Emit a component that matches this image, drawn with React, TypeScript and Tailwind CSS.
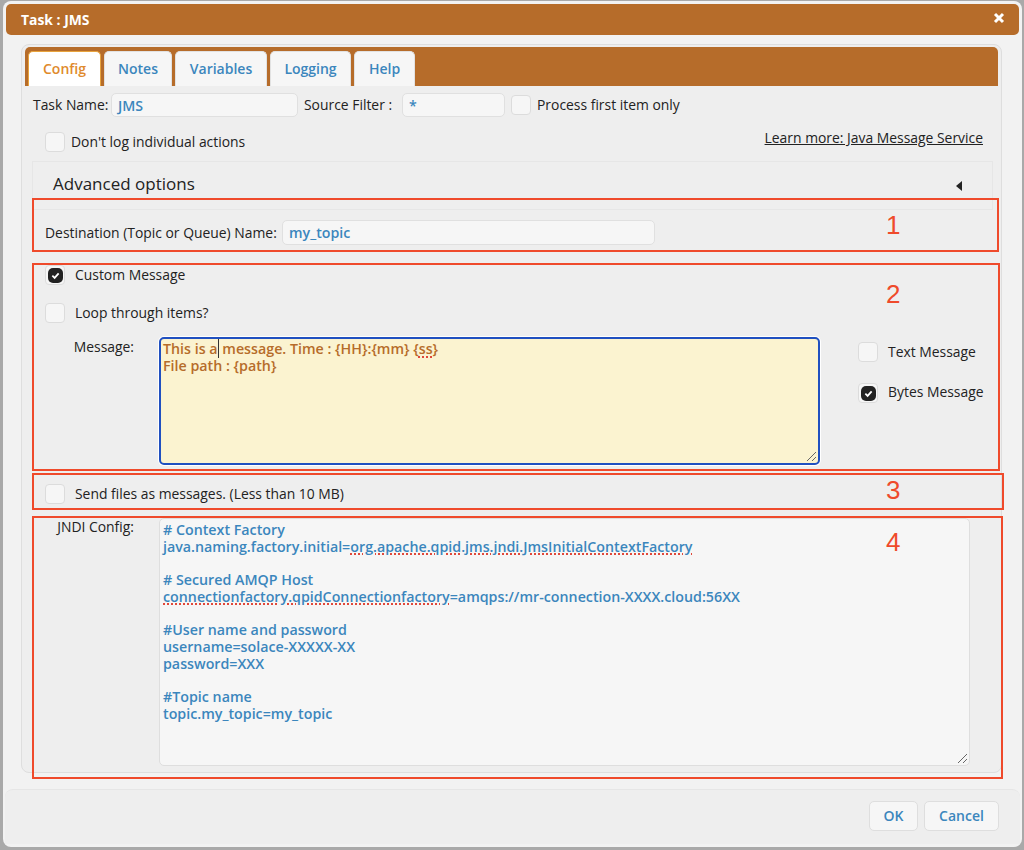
import React from "react";

const wavy = "underline decoration-dotted decoration-[#e0483a] decoration-2 underline-offset-[2px]";

function Check({ on = false }: { on?: boolean }) {
  return (
    <span className="flex h-[20px] w-[20px] shrink-0 items-center justify-center rounded-[4px] border border-[#dcdcdc] bg-[#f6f6f6]">
      {on && (
        <span className="flex h-[15px] w-[15px] items-center justify-center rounded-[5px] bg-[#222]">
          <svg width="9" height="9" viewBox="0 0 10 10">
            <path d="M1.5 5.2 L4 7.6 L8.5 2.6" fill="none" stroke="#fff" strokeWidth="2" />
          </svg>
        </span>
      )}
    </span>
  );
}

function Tab({ label, active = false, w }: { label: string; active?: boolean; w: string }) {
  return (
    <div
      className={`flex h-[35px] items-center justify-center rounded-t-[5px] border border-b-0 pb-[2px] text-[14px] font-semibold ${w} ${
        active ? "border-[#e8a33d] bg-white text-[#e08a2c]" : "border-[#e2e2e2] bg-[#f6f6f6] text-[#3b86bd]"
      }`}
    >
      {label}
    </div>
  );
}

function Field({ value, w }: { value: string; w: string }) {
  return (
    <div className={`flex h-full items-center rounded-[5px] border border-[#e0e0e0] bg-[#f6f6f6] px-[6px] text-[14.2px] font-semibold text-[#3b86bd] ${w}`}>
      {value}
    </div>
  );
}

function Grip() {
  return (
    <svg className="absolute bottom-[1px] right-[1px]" width="11" height="11" viewBox="0 0 11 11">
      <path d="M1 10 L10 1 M6 10 L10 6" stroke="#666" strokeWidth="1" />
    </svg>
  );
}

function Box({ x, y, w, h }: { x: string; y: string; w: string; h: string }) {
  return <div className={`pointer-events-none absolute border-2 border-[#ef4a2b] ${x} ${y} ${w} ${h}`} />;
}

function Num({ n, cls }: { n: string; cls: string }) {
  return (
    <div className={`absolute text-[26px] leading-[30px] text-[#ef4a2b] font-['Liberation_Sans',sans-serif] ${cls}`}>{n}</div>
  );
}

export default function App() {
  return (
    <div className="relative h-[850px] w-[1024px] overflow-hidden bg-[#a9a9a9] font-['Open_Sans',sans-serif] text-[13.9px] leading-[17px] text-[#222]">
      <div className="ml-[3px] mt-[1px] flex h-[846px] w-[1019px] flex-col rounded-lg bg-[#f2f2f2] p-[3px]">
        <div className="flex h-[31px] shrink-0 items-center justify-between rounded-[5px] bg-[#b66c2a] pl-[15px] pr-[14px] font-bold text-white">
          <span>Task : JMS</span>
          <svg className="-mt-[4px]" width="12" height="12" viewBox="0 0 12 12">
            <path d="M2 2 L10 10 M10 2 L2 10" stroke="#fff" strokeWidth="3" />
          </svg>
        </div>

        <div className="ml-[15px] mt-[9px] h-[729px] w-[981px] shrink-0 rounded-lg border border-[#dedede] bg-[#eeeeee] px-[3px] pt-[2px]">
          <div className="flex h-[39px] items-end gap-[3px] rounded-[5px] rounded-b-none bg-[#b66c2a] pl-[3px]">
            <Tab label="Config" active w="w-[73px]" />
            <Tab label="Notes" w="w-[68px]" />
            <Tab label="Variables" w="w-[92px]" />
            <Tab label="Logging" w="w-[81px]" />
            <Tab label="Help" w="w-[61px]" />
          </div>

          <div className="mt-[7px] flex h-[24px] items-center pl-[8px]">
            <span className="w-[78px] -translate-y-px">Task Name:</span>
            <Field value="JMS" w="w-[187px]" />
            <span className="ml-[6px] w-[98px] -translate-y-px">Source Filter :</span>
            <Field value="*" w="w-[103px]" />
            <span className="ml-[6px]"><Check /></span>
            <span className="ml-[6px] -translate-y-px">Process first item only</span>
          </div>

          <div className="mt-[15px] flex h-[20px] items-center justify-between pl-[20px] pr-[15px]">
            <div className="flex items-center gap-[6px]">
              <Check />
              <span className="-translate-y-px">Don't log individual actions</span>
            </div>
            <a className="-mt-[9px] underline">Learn more: Java Message Service</a>
          </div>

          <div className="ml-[7px] mt-[9px] flex h-[49px] w-[961px] items-center justify-between border border-[#e6e6e6] pl-[20px] pr-[30px] text-[17px]">
            <span className="-translate-y-[2px]">Advanced options</span>
            <svg className="mt-[1px]" width="6" height="10" viewBox="0 0 6 10">
              <path d="M6 0 V10 L0 5 Z" fill="#222" />
            </svg>
          </div>

          <div className="mt-[10px] flex h-[25px] items-center pl-[20px]">
            <span className="w-[237px]">Destination (Topic or Queue) Name:</span>
            <Field value="my_topic" w="w-[373px]" />
          </div>

          <div className="mt-[20px] flex h-[20px] items-center gap-[10px] pl-[20px]">
            <Check on />
            <span className="-translate-y-px">Custom Message</span>
          </div>
          <div className="mt-[18px] flex h-[20px] items-center gap-[10px] pl-[20px]">
            <Check />
            <span className="-translate-y-px">Loop through items?</span>
          </div>

          <div className="mt-[14px] flex h-[128px]">
            <div className="w-[109px] pt-[1px] text-right">Message:</div>
            <div className="relative ml-[25px] h-full w-[661px] rounded-[5px] border-2 border-[#2050c0] bg-[#fbf3d0] px-[2px] pt-[1px] text-[14.25px] font-semibold leading-[17px] text-[#b66c2a] shadow-[0_0_0_1px_#ffffff]">
              <div className="whitespace-pre">
                This is a<span className="border-l border-[#333]" /> message. Time : {"{HH}:{mm} "}
                <span>{"{"}</span><span className={wavy}>ss</span><span>{"}"}</span>
              </div>
              <div className="whitespace-pre">{"File path : {path}"}</div>
              <Grip />
            </div>
            <div className="ml-[38px] flex flex-col gap-[21px] pt-[5px]">
              <div className="flex items-center gap-[10px]">
                <Check />
                <span className="-translate-y-px">Text Message</span>
              </div>
              <div className="flex items-center gap-[10px]">
                <Check on />
                <span className="-translate-y-[2px]">Bytes Message</span>
              </div>
            </div>
          </div>

          <div className="mt-[19px] flex h-[20px] items-center gap-[10px] pl-[20px]">
            <Check />
            <span className="-translate-y-px">Send files as messages. (Less than 10 MB)</span>
          </div>

          <div className="mt-[14px] flex h-[248px]">
            <div className="w-[109px] text-right">JNDI Config:</div>
            <div className="relative ml-[25px] h-full w-[811px] rounded-[5px] border border-[#dedede] bg-[#f6f6f6] px-[3px] pt-[3px] text-[14.25px] font-semibold leading-[16.7px] text-[#3b86bd]">
              <div className="whitespace-pre"># Context Factory</div>
              <div className="whitespace-pre">java.naming.factory.initial=<span className={wavy}>org.apache.qpid.jms.jndi.JmsInitialContextFactory</span></div>
              <div className="h-[16.7px]" />
              <div className="whitespace-pre"># Secured AMQP Host</div>
              <div className="whitespace-pre"><span className={wavy}>connectionfactory.qpidConnectionfactory</span>=amqps://mr-connection-XXXX.cloud:56XX</div>
              <div className="h-[16.7px]" />
              <div className="whitespace-pre">#User name and password</div>
              <div className="whitespace-pre">username=solace-XXXXX-XX</div>
              <div className="whitespace-pre">password=XXX</div>
              <div className="h-[16.7px]" />
              <div className="whitespace-pre">#Topic name</div>
              <div className="whitespace-pre">topic.my_topic=my_topic</div>
              <Grip />
            </div>
          </div>
        </div>

        <div className="-mx-[1px] mt-[16px] flex min-h-0 flex-1 items-start justify-end gap-[6px] rounded-t-lg border-t border-[#e6e6e6] bg-[#eeeeee] pr-[21px] pt-[11px] text-[14px] font-semibold text-[#3b86bd]">
          <div className="flex h-[30px] w-[49px] items-center justify-center rounded-[5px] border border-[#dedede] bg-[#f6f6f6] pb-[2px]">OK</div>
          <div className="flex h-[30px] w-[75px] items-center justify-center rounded-[5px] border border-[#dedede] bg-[#f6f6f6] pb-[2px]">Cancel</div>
        </div>
      </div>

      <Box x="left-[32px]" y="top-[198px]" w="w-[967px]" h="h-[54px]" />
      <Box x="left-[32px]" y="top-[263px]" w="w-[968px]" h="h-[208px]" />
      <Box x="left-[32px]" y="top-[473px]" w="w-[972px]" h="h-[37px]" />
      <Box x="left-[32px]" y="top-[516px]" w="w-[971px]" h="h-[263px]" />
      <Num n="1" cls="left-[886px] top-[210px]" />
      <Num n="2" cls="left-[886px] top-[279px]" />
      <Num n="3" cls="left-[886px] top-[475px]" />
      <Num n="4" cls="left-[886px] top-[527px]" />
    </div>
  );
}
